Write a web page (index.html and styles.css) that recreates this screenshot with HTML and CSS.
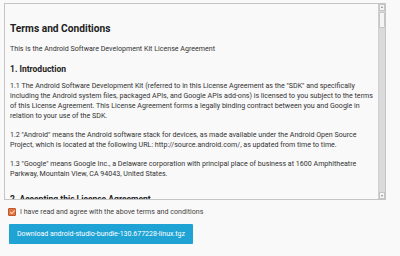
FILE: index.html
```html
<!DOCTYPE html>
<html lang="en">
<head>
    <meta charset="UTF-8">
    <meta name="viewport" content="width=device-width, initial-scale=1.0">
    <title>Download Android Studio</title>
    <link rel="stylesheet" href="styles.css">
</head>
<body>
    <div class="terms-box">
        <div class="terms-content">
            <h2>Terms and Conditions</h2>
            <p>This is the Android Software Development Kit License Agreement</p>
            <h3>1. Introduction</h3>
            <p>1.1 The Android Software Development Kit (referred to in this License Agreement as the "SDK" and specifically including the Android system files, packaged APIs, and Google APIs add-ons) is licensed to you subject to the terms of this License Agreement. This License Agreement forms a legally binding contract between you and Google in relation to your use of the SDK.</p>
            <p>1.2 "Android" means the Android software stack for devices, as made available under the Android Open Source Project, which is located at the following URL: http://source.android.com/, as updated from time to time.</p>
            <p>1.3 "Google" means Google Inc., a Delaware corporation with principal place of business at 1600 Amphitheatre Parkway, Mountain View, CA 94043, United States.</p>
            <h3 class="next-section">2. Accepting this License Agreement</h3>
        </div>
        <div class="scrollbar">
            <span class="scroll-btn up"></span>
            <span class="scroll-thumb"></span>
            <span class="scroll-track"></span>
            <span class="scroll-btn down"></span>
        </div>
    </div>
    <div class="agree">
        <span class="check"></span>
        <span class="agree-text">I have read and agree with the above terms and conditions</span>
    </div>
    <button class="download">Download android-studio-bundle-130.677228-linux.tgz</button>
</body>
</html>
```

FILE: styles.css
```css
* {
    box-sizing: border-box;
    margin: 0;
    padding: 0;
}

body {
    font-family: Roboto, "Liberation Sans", Arial, sans-serif;
    font-size: 7.1px;
    line-height: 10px;
    color: #333;
    background-color: #f9f9f9;
    padding: 3px 14px 0 4px;
}

.terms-box {
    display: flex;
    height: 197px;
    border: 1px solid #c4c4c4;
    background-color: #f9f9f9;
    overflow: hidden;
}

.terms-content {
    flex: 1;
    overflow: hidden;
    padding: 18px 1px 0 5px;
}

.scrollbar {
    width: 7px;
    display: flex;
    flex-direction: column;
    background-color: #dadada;
    border-left: 1px solid #cfcfcf;
}

.scroll-btn {
    height: 7px;
    background-color: #f4f4f4;
    border: 1px solid #c6c6c6;
    position: relative;
}

.scroll-btn::after {
    content: '';
    position: absolute;
    left: 1px;
    top: 1px;
    border-left: 1.5px solid transparent;
    border-right: 1.5px solid transparent;
}

.scroll-btn.up::after {
    border-bottom: 2px solid #888;
}

.scroll-btn.down::after {
    top: 2px;
    border-top: 2px solid #888;
}

.scroll-thumb {
    height: 16px;
    margin-top: 1px;
    background-color: #f4f4f4;
    border: 1px solid #c6c6c6;
    border-radius: 1px;
}

.scroll-track {
    flex: 1;
}

h2 {
    font-size: 10.2px;
    line-height: 14px;
    font-weight: 700;
    color: #222;
    margin-bottom: 8px;
}

h3 {
    font-size: 8.5px;
    line-height: 12px;
    font-weight: 700;
    color: #222;
    margin-bottom: 6px;
}

h3.next-section {
    margin-top: 14px;
}

p {
    margin-bottom: 9px;
}

.agree {
    display: flex;
    align-items: center;
    gap: 4px;
    margin: 7px 0 0 4px;
    color: #444;
}

.check {
    flex: none;
    width: 8px;
    height: 8px;
    border-radius: 1px;
    background-color: #e2733e;
    border: 1px solid #c0572a;
    position: relative;
}

.check::after {
    content: '';
    position: absolute;
    left: 1.5px;
    top: 0;
    width: 2px;
    height: 4px;
    border: solid #fbd6c0;
    border-width: 0 1px 1px 0;
    transform: rotate(45deg);
}

.download {
    display: block;
    margin: 7px 0 0 5px;
    width: 184px;
    height: 20px;
    padding: 0;
    font-family: inherit;
    font-size: 7px;
    color: #fff;
    background-color: #1fa3d4;
    border: none;
    border-radius: 1px;
    box-shadow: 0 1px 1px rgba(0,0,0,0.15);
}
```
